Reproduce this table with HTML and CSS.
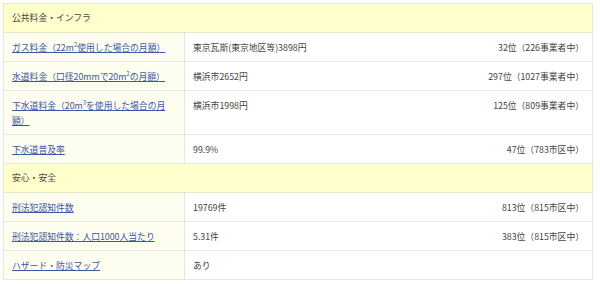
FILE: index.html
```html
<!DOCTYPE html>
<html lang="ja">
<head>
<meta charset="utf-8">
<link rel="stylesheet" href="styles.css">
</head>
<body>
<table class="data">
  <colgroup><col class="c-label"><col class="c-data"></colgroup>
  <tr class="sec"><th colspan="2">公共料金・インフラ</th></tr>
  <tr><td class="label"><a href="#">ガス料金（22m<sup>2</sup>使用した場合の月額）</a></td><td class="val"><div class="row"><span>東京瓦斯(東京地区等)3898円</span><span class="rank">32位（226事業者中）</span></div></td></tr>
  <tr><td class="label"><a href="#">水道料金（口径20mmで20m<sup>2</sup>の月額）</a></td><td class="val"><div class="row"><span>横浜市2652円</span><span class="rank">297位（1027事業者中）</span></div></td></tr>
  <tr class="tall"><td class="label"><a href="#">下水道料金（20m<sup>3</sup>を使用した場合の月額）</a></td><td class="val"><div class="row"><span>横浜市1998円</span><span class="rank">125位（809事業者中）</span></div></td></tr>
  <tr><td class="label"><a href="#">下水道普及率</a></td><td class="val"><div class="row"><span>99.9%</span><span class="rank">47位（783市区中）</span></div></td></tr>
  <tr class="sec"><th colspan="2">安心・安全</th></tr>
  <tr><td class="label"><a href="#">刑法犯認知件数</a></td><td class="val"><div class="row"><span>19769件</span><span class="rank">813位（815市区中）</span></div></td></tr>
  <tr><td class="label"><a href="#">刑法犯認知件数：人口1000人当たり</a></td><td class="val"><div class="row"><span>5.31件</span><span class="rank">383位（815市区中）</span></div></td></tr>
  <tr><td class="label"><a href="#">ハザード・防災マップ</a></td><td class="val"><div class="row"><span>あり</span></div></td></tr>
</table>
</body>
</html>
```
FILE: styles.css
```css
html, body { margin: 0; padding: 0; background: #fff; }
body { padding: 3px 0 0 3px; }
.data {
  border-collapse: collapse;
  width: 590px;
  table-layout: fixed;
  font-family: "Noto Sans CJK JP", "Noto Sans", sans-serif;
  font-size: 8.8px;
  line-height: 15px;
  color: #444;
}
.c-label { width: 181px; }
.data th, .data td {
  border: 1px solid #e6e6e2;
  padding: 7px 7px 6px 8px;
  text-align: left;
  vertical-align: top;
  font-weight: normal;
}
.sec th {
  background: #ffffcc;
  border-color: #e8e8c8;
  padding-top: 6px;
  padding-bottom: 7px;
}
.data td.label { background: #fdfdf0; line-break: anywhere; padding-right: 13px; }
.label a { color: #3b57a6; text-decoration: underline; }
.label sup { font-size: 6px; line-height: 1; vertical-align: 4px; }
.val { background: #fff; }
.data td.val { padding-right: 8px; }
.row { display: flex; justify-content: space-between; gap: 8px; }
.rank { text-align: right; }
```
